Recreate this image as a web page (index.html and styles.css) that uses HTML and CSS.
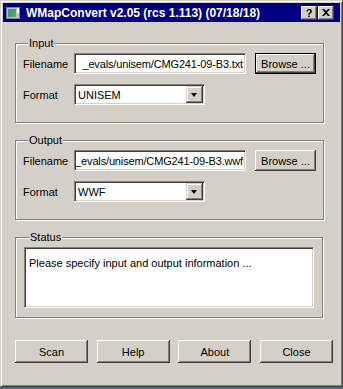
FILE: index.html
```html
<!DOCTYPE html>
<html lang="en">
<head>
  <meta charset="UTF-8" />
  <title>WMapConvert</title>
  <link rel="stylesheet" href="styles.css">
</head>
<body>
  <div class="window">
    <div class="titlebar">
      <svg class="app-icon" width="16" height="16" viewBox="0 0 16 16">
        <defs>
          <linearGradient id="ig" x1="0" y1="0" x2="1" y2="1">
            <stop offset="0" stop-color="#3c8c8c" />
            <stop offset="1" stop-color="#58b060" />
          </linearGradient>
        </defs>
        <rect x="1.5" y="2.5" width="13" height="11" fill="#c0c0c0" stroke="#808080" />
        <rect x="3" y="4" width="8" height="8" fill="url(#ig)" />
        <rect x="12" y="3" width="2" height="5" fill="#fff" />
      </svg>
      <span class="title">WMapConvert v2.05 (rcs 1.113) (07/18/18)</span>
      <div class="caption-buttons">
        <div class="cap help">?</div>
        <div class="cap close">
          <svg width="8" height="7" viewBox="0 0 8 7">
            <path d="M0 0h2l2 2 2-2h2L5 3.5 8 7H6L4 5 2 7H0l3-3.5z" fill="#000" />
          </svg>
        </div>
      </div>
    </div>

    <div class="content">
      <fieldset class="group">
        <legend>Input</legend>
        <div class="row">
          <span class="label">Filename</span>
          <div class="textbox"><span>_evals/unisem/CMG241-09-B3.txt</span></div>
          <div class="btn default">Browse ...</div>
        </div>
        <div class="row">
          <span class="label">Format</span>
          <div class="combo"><span>UNISEM</span><div class="drop"></div></div>
        </div>
      </fieldset>

      <fieldset class="group">
        <legend>Output</legend>
        <div class="row">
          <span class="label">Filename</span>
          <div class="textbox"><span>_evals/unisem/CMG241-09-B3.wwf</span></div>
          <div class="btn">Browse ...</div>
        </div>
        <div class="row">
          <span class="label">Format</span>
          <div class="combo"><span>WWF</span><div class="drop"></div></div>
        </div>
      </fieldset>

      <fieldset class="group status">
        <legend>Status</legend>
        <div class="status-box">Please specify input and output information ...</div>
      </fieldset>

      <div class="actions">
        <div class="btn action">Scan</div>
        <div class="btn action">Help</div>
        <div class="btn action">About</div>
        <div class="btn action">Close</div>
      </div>
    </div>
  </div>
</body>
</html>
```

FILE: styles.css
```css
body {
  margin: 0;
  background-color: #3a6ea5;
  font-family: "Liberation Sans", Arial, sans-serif;
  font-size: 11px;
  color: #000;
}
.window {
  width: 343px;
  height: 387px;
  box-sizing: border-box;
  background-color: #d4d0c8;
  border: 1px solid;
  border-color: #d4d0c8 #404040 #404040 #d4d0c8;
  box-shadow: inset 1px 1px 0 #fff, inset -1px -1px 0 #808080;
  padding: 2px;
}
.titlebar {
  height: 19px;
  background-color: #000080;
  display: flex;
  align-items: center;
  color: #fff;
  padding: 0 2px;
}
.app-icon {
  margin-right: 5px;
}
.title {
  font-weight: bold;
  font-size: 12px;
  flex: 1;
  white-space: nowrap;
}
.caption-buttons {
  display: flex;
  gap: 1px;
  margin-right: 4px;
}
.cap {
  width: 16px;
  height: 14px;
  box-sizing: border-box;
  background-color: #d4d0c8;
  color: #000;
  font-weight: bold;
  font-size: 11px;
  display: flex;
  align-items: center;
  justify-content: center;
  box-shadow: inset -1px -1px 0 #404040, inset 1px 1px 0 #fff, inset -2px -2px 0 #808080;
}
.content {
  padding: 15px 0 0 12px;
}
.group {
  width: 308px;
  box-sizing: border-box;
  margin: 0 0 11px 0;
  padding: 3px 7px 17px 7px;
  border: 1px solid #808080;
  box-shadow: inset 1px 1px 0 #fff, 1px 1px 0 #fff;
}
.group legend {
  margin-left: 5px;
  padding: 0 1px;
  line-height: 13px;
  background-color: #d4d0c8;
}
.row {
  display: flex;
  align-items: center;
  height: 21px;
}
.row + .row {
  margin-top: 10px;
}
.label {
  width: 51px;
  flex: none;
}
.textbox {
  width: 172px;
  height: 21px;
  flex: none;
  box-sizing: border-box;
  background-color: #fff;
  border: 1px solid;
  border-color: #808080 #fff #fff #808080;
  box-shadow: inset 1px 1px 0 #404040, inset -1px -1px 0 #d4d0c8;
  display: flex;
  justify-content: flex-end;
  align-items: center;
  overflow: hidden;
  white-space: nowrap;
  letter-spacing: -0.15px;
  padding: 0 2px 0 1px;
}
.btn {
  box-sizing: border-box;
  background-color: #d4d0c8;
  display: flex;
  align-items: center;
  justify-content: center;
  box-shadow: inset -1px -1px 0 #404040, inset 1px 1px 0 #fff, inset -2px -2px 0 #808080;
}
.row .btn {
  width: 61px;
  height: 21px;
  margin-left: 9px;
}
.btn.default {
  border: 1px solid #000;
}
.combo {
  width: 131px;
  height: 21px;
  box-sizing: border-box;
  background-color: #fff;
  border: 1px solid;
  border-color: #808080 #fff #fff #808080;
  box-shadow: inset 1px 1px 0 #404040, inset -1px -1px 0 #d4d0c8;
  display: flex;
  align-items: center;
  padding: 2px 1px 1px 3px;
}
.combo span {
  flex: 1;
}
.drop {
  width: 17px;
  height: 17px;
  flex: none;
  position: relative;
  background-color: #d4d0c8;
  box-shadow: inset -1px -1px 0 #404040, inset 1px 1px 0 #d4d0c8, inset -2px -2px 0 #808080, inset 2px 2px 0 #fff;
  margin-top: -1px;
}
.drop::after {
  content: "";
  position: absolute;
  left: 5px;
  top: 7px;
  border-left: 3.5px solid transparent;
  border-right: 3.5px solid transparent;
  border-top: 4px solid #000;
}
.status {
  padding: 3px 8px 9px 8px;
}
.status-box {
  height: 61px;
  box-sizing: border-box;
  background-color: #fff;
  border: 1px solid;
  border-color: #808080 #fff #fff #808080;
  box-shadow: inset 1px 1px 0 #404040, inset -1px -1px 0 #d4d0c8;
  padding: 9px 4px;
}
.actions {
  width: 318px;
  display: flex;
  justify-content: space-between;
  margin-top: 22px;
}
.btn.action {
  width: 73px;
  height: 23px;
}
```
